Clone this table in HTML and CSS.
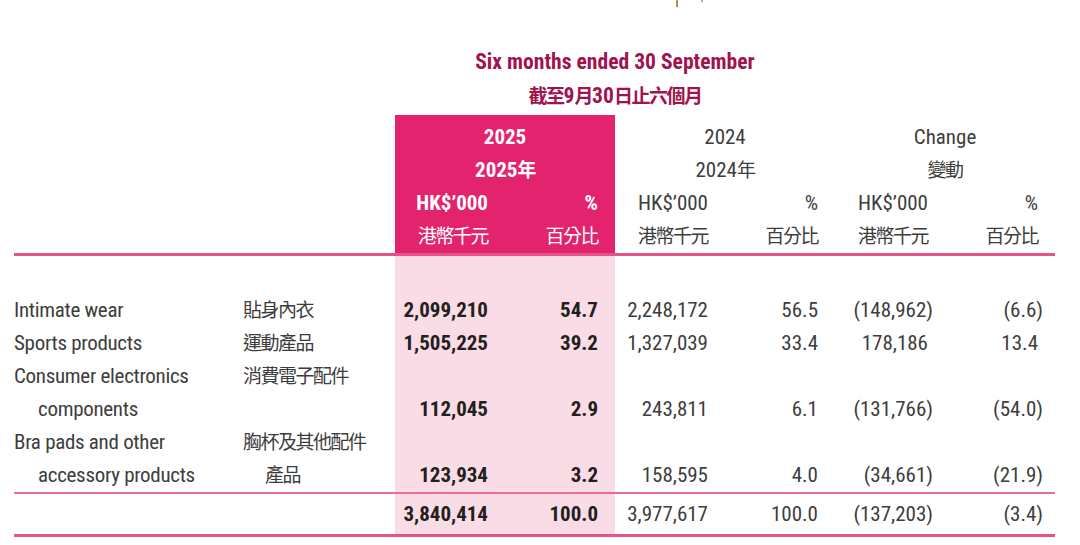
FILE: index.html
```html
<!DOCTYPE html>
<html lang="en">
<head>
<meta charset="utf-8">
<title>Six months ended 30 September</title>
<link rel="stylesheet" href="styles.css">
</head>
<body>
<div class="page">
  <div class="marks"><span class="mark1"></span><span class="mark2"></span></div>

  <div class="titlebar">
    <div class="title">Six months ended 30 September<br><span class="zh">截至</span>9<span class="zh">月</span>30<span class="zh">日止六個月</span></div>
  </div>

  <div class="row pad"><div></div><div></div><div class="dark s2"></div></div>
  <div class="row">
    <div></div><div></div>
    <div class="dark s2 c">2025</div>
    <div class="s2 c">2024</div>
    <div class="s2 c">Change</div>
  </div>
  <div class="row">
    <div></div><div></div>
    <div class="dark s2 c">2025<span class="zh">年</span></div>
    <div class="s2 c">2024<span class="zh">年</span></div>
    <div class="s2 c"><span class="zh">變動</span></div>
  </div>
  <div class="row">
    <div></div><div></div>
    <div class="dark num">HK$’000</div><div class="dark num">%</div>
    <div class="num">HK$’000</div><div class="num">%</div>
    <div class="num">HK$’000</div><div class="num">%</div>
  </div>
  <div class="row">
    <div></div><div></div>
    <div class="dark num"><span class="zh reg">港幣千元</span></div><div class="dark num"><span class="zh reg">百分比</span></div>
    <div class="num"><span class="zh">港幣千元</span></div><div class="num"><span class="zh">百分比</span></div>
    <div class="num"><span class="zh">港幣千元</span></div><div class="num"><span class="zh">百分比</span></div>
  </div>

  <div class="rule"></div>

  <div class="row spacer"><div></div><div></div><div class="pale"></div><div class="pale"></div></div>

  <div class="row">
    <div class="lbl">Intimate wear</div>
    <div class="lbl"><span class="zh">貼身內衣</span></div>
    <div class="pale num b">2,099,210</div><div class="pale num b">54.7</div>
    <div class="num">2,248,172</div><div class="num">56.5</div>
    <div class="num"><span class="neg">(148,962)</span></div><div class="num"><span class="neg">(6.6)</span></div>
  </div>
  <div class="row">
    <div class="lbl">Sports products</div>
    <div class="lbl"><span class="zh">運動產品</span></div>
    <div class="pale num b">1,505,225</div><div class="pale num b">39.2</div>
    <div class="num">1,327,039</div><div class="num">33.4</div>
    <div class="num">178,186</div><div class="num">13.4</div>
  </div>
  <div class="row two">
    <div class="lbl">Consumer electronics<br><span class="ind">components</span></div>
    <div class="lbl"><span class="zh">消費電子配件</span></div>
    <div class="pale num b">112,045</div><div class="pale num b">2.9</div>
    <div class="num">243,811</div><div class="num">6.1</div>
    <div class="num"><span class="neg">(131,766)</span></div><div class="num"><span class="neg">(54.0)</span></div>
  </div>
  <div class="row two">
    <div class="lbl">Bra pads and other<br><span class="ind">accessory products</span></div>
    <div class="lbl"><span class="zh">胸杯及其他配件</span><br><span class="zh ind2">產品</span></div>
    <div class="pale num b">123,934</div><div class="pale num b">3.2</div>
    <div class="num">158,595</div><div class="num">4.0</div>
    <div class="num"><span class="neg">(34,661)</span></div><div class="num"><span class="neg">(21.9)</span></div>
  </div>

  <div class="rule thin"></div>

  <div class="row total">
    <div></div><div></div>
    <div class="pale num b">3,840,414</div><div class="pale num b">100.0</div>
    <div class="num">3,977,617</div><div class="num">100.0</div>
    <div class="num"><span class="neg">(137,203)</span></div><div class="num"><span class="neg">(3.4)</span></div>
  </div>

  <div class="rule"></div>
</div>
</body>
</html>
```

FILE: styles.css
```css
* { box-sizing: border-box; }

html, body {
  margin: 0;
  padding: 0;
  background: #ffffff;
}

body {
  font-family: "Roboto", "Liberation Sans", "Noto Sans CJK TC", sans-serif;
  font-stretch: 75%;
  font-size: 21px;
  color: #3d3d3d;
}

.page {
  width: 1080px;
  height: 545px;
  padding-left: 14px;
  overflow: hidden;
}

/* tiny marks at the very top */
.marks {
  height: 8px;
  display: flex;
  align-items: flex-start;
}
.mark1 {
  margin-left: 662px;
  width: 2px;
  height: 7px;
  background: #b88a5c;
}
.mark2 {
  margin-left: 23px;
  width: 2px;
  height: 2px;
  background: #c9a27a;
}

/* title */
.titlebar {
  margin-top: 37px;
  margin-bottom: 2px;
  display: grid;
  grid-template-columns: 381px 440px;
}
.title {
  grid-column: 2;
  text-align: center;
  font-weight: bold;
  font-size: 21.6px;
  color: #a0134e;
  line-height: 34px;
  white-space: nowrap;
}

/* table rows */
.row {
  display: grid;
  grid-template-columns: 229px 152px repeat(6, 110px);
  line-height: 33px;
}
.pad { height: 6px; }
.spacer { height: 38px; }
.total { line-height: 40px; }

.s2 { grid-column: span 2; }
.c { text-align: center; }

.dark {
  background: #e4236f;
  color: #ffffff;
  font-weight: bold;
}
.dark .reg { font-weight: normal; }

.pale { background: #f9dce5; }

.num {
  text-align: right;
  padding-right: 17px;
  white-space: nowrap;
}
.two .num { padding-top: 33px; }

.b {
  font-weight: bold;
  color: #231f20;
}

.neg { margin-right: -5px; }

.lbl {
  white-space: nowrap;
  letter-spacing: -0.3px;
}
.ind { padding-left: 24px; }
.ind2 { padding-left: 22px; }

.zh {
  font-family: "Noto Sans CJK TC", "Noto Sans CJK SC", sans-serif;
  font-stretch: normal;
  font-size: 19px;
  line-height: 1;
  letter-spacing: -1.5px;
}

/* horizontal rules */
.rule {
  width: 1041px;
  height: 3px;
  background: #e6538b;
}
.rule.thin {
  height: 2px;
  background: #ea6d9c;
}
```
